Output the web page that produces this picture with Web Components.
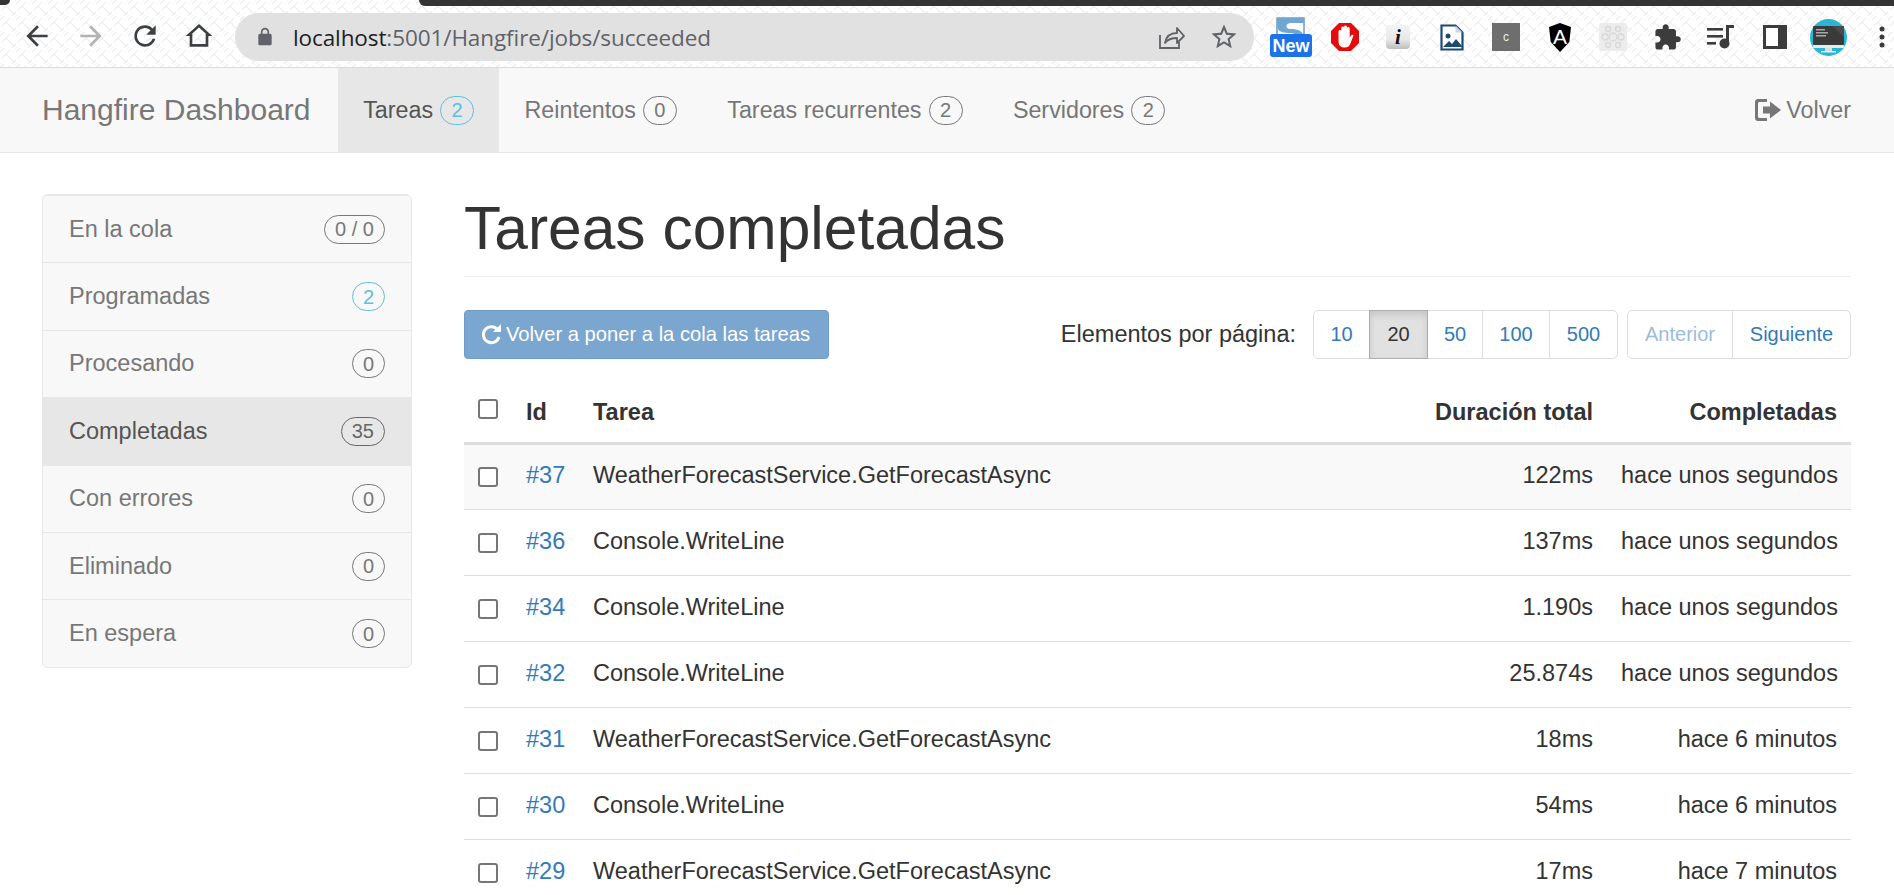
<!DOCTYPE html>
<html lang="es">
<head>
<meta charset="utf-8">
<title>Hangfire Dashboard</title>
<style>
  html, body { margin: 0; height: 895px; overflow: hidden; background: #fff; }
  body { font-family: "Liberation Sans", Arial, sans-serif; color: #333; }
</style>
</head>
<body>
<hf-chrome></hf-chrome>
<hf-navbar></hf-navbar>
<hf-layout>
  <hf-sidebar slot="side"></hf-sidebar>
  <hf-jobs-page></hf-jobs-page>
</hf-layout>

<script>
const weave = "url(\"data:image/svg+xml,%3Csvg xmlns='http://www.w3.org/2000/svg' width='16' height='16'%3E%3Cpath d='M-2 6L6-2M2 10L10 2M10 18L18 10M14 22L22 14M6 6L14 14M-2 14L2 18M14-2L18 2' stroke='%23f0f0f0' stroke-width='1.6' fill='none'/%3E%3C/svg%3E\")";

const ic = {
  back: 'M20 11H7.83l5.59-5.59L12 4l-8 8 8 8 1.41-1.41L7.83 13H20v-2z',
  fwd: 'M4 11h12.17l-5.59-5.59L12 4l8 8-8 8-1.41-1.41L16.17 13H4v-2z',
  reload: 'M17.65 6.35C16.2 4.9 14.21 4 12 4c-4.42 0-7.99 3.58-7.99 8s3.57 8 7.99 8c3.73 0 6.84-2.55 7.73-6h-2.08c-.82 2.33-3.04 4-5.65 4-3.31 0-6-2.69-6-6s2.69-6 6-6c1.66 0 3.14.69 4.22 1.78L13 11h7V4l-2.35 2.35z',
  home: 'M12 3L2 12h3v8h14v-8h3L12 3zm0 2.7l5 4.5V18H7v-7.8l5-4.5z',
  lock: 'M18 8h-1V6c0-2.76-2.24-5-5-5S7 3.24 7 6v2H6c-1.1 0-2 .9-2 2v10c0 1.1.9 2 2 2h12c1.1 0 2-.9 2-2V10c0-1.1-.9-2-2-2zM9 6c0-1.66 1.34-3 3-3s3 1.34 3 3v2H9V6z',
  star: 'M22 9.24l-7.19-.62L12 2 9.19 8.63 2 9.24l5.46 4.73L5.82 21 12 17.27 18.18 21l-1.63-7.03L22 9.24zM12 15.4l-3.76 2.27 1-4.28-3.32-2.88 4.38-.38L12 6.1l1.71 4.04 4.38.38-3.32 2.88 1 4.28L12 15.4z',
  puzzle: 'M20.5 11H19V7c0-1.1-.9-2-2-2h-4V3.5C13 2.12 11.88 1 10.5 1S8 2.12 8 3.5V5H4c-1.1 0-1.99.9-1.99 2v3.8H3.5c1.49 0 2.7 1.21 2.7 2.7s-1.21 2.7-2.7 2.7H2V20c0 1.1.9 2 2 2h3.8v-1.5c0-1.49 1.21-2.7 2.7-2.7 1.49 0 2.7 1.21 2.7 2.7V22H17c1.1 0 2-.9 2-2v-4h1.5c1.38 0 2.5-1.12 2.5-2.5S21.88 11 20.5 11z'
};
const svg24 = (d, size, fill) => `<svg width="${size}" height="${size}" viewBox="0 0 24 24"><path d="${d}" fill="${fill}"/></svg>`;

class HfChrome extends HTMLElement {
  connectedCallback() {
    this.attachShadow({ mode: 'open' });
    this.shadowRoot.innerHTML = `
      <style>
        :host { display: flex; position: relative; height: 67px; border-bottom: 1px solid #dcdcdc; background: #fff ${weave}; align-items: center; overflow: hidden; font-family: "Open Sans", sans-serif; }
        .strip { position: absolute; left: 419px; right: 0; top: 0; height: 6px; background: #333; border-bottom-left-radius: 6px; }
        .corner { position: absolute; left: 0; top: 0; width: 10px; height: 5px; background: #333; border-bottom-right-radius: 8px; }
        .nav { display: flex; margin-left: 10px; flex: none; margin-top: 5px; }
        .btn { width: 54px; height: 40px; display: flex; align-items: center; justify-content: center; flex: none; }
        .pill { flex: none; width: 1019px; height: 48px; margin-left: 9px; margin-top: 7px; border-radius: 24px; background: #e1e1e1; display: flex; align-items: center; box-sizing: border-box; padding-left: 20px; }
        .url { margin-left: 18px; font-size: 22.5px; letter-spacing: -0.1px; color: #5f6368; flex: 1; white-space: nowrap; }
        .url b { font-weight: 400; color: #202124; }
        .pill .end { width: 53px; display: flex; justify-content: center; flex: none; }
        .tools { display: flex; flex: none; margin-left: 10px; margin-top: 7px; }
        .tools span { width: 53.75px; height: 50px; flex: none; display: flex; align-items: center; justify-content: center; }
        svg { display: block; }
      </style>
      <div class="strip"></div><div class="corner"></div>
      <div class="nav">
        <div class="btn">${svg24(ic.back, 32, '#3c4043')}</div>
        <div class="btn">${svg24(ic.fwd, 32, '#b3b3b3')}</div>
        <div class="btn">${svg24(ic.reload, 32, '#3c4043')}</div>
        <div class="btn">${svg24(ic.home, 32, '#3c4043')}</div>
      </div>
      <div class="pill">
        ${svg24(ic.lock, 20, '#5f6368')}
        <div class="url"><b>localhost</b>:5001/Hangfire/jobs/succeeded</div>
        <div class="end"><svg width="30" height="30" viewBox="0 0 30 30" fill="none" stroke="#5f6368" stroke-width="1.8"><path d="M4 13v13h19v-6"/><path d="M9 21c1-6 5-10 12-10V6l7 8-7 7v-5c-5 0-9 1-12 5z" stroke-linejoin="round"/></svg></div>
        <div class="end" style="width:54px;margin-right:3px">${svg24(ic.star, 30, '#5f6368')}</div>
      </div>
      <div class="tools">
        <span><svg width="44" height="40" viewBox="0 0 44 40"><rect x="8" y="1" width="27" height="18" fill="#fff" stroke="#6b9fc9" stroke-width="1.5"/><path d="M8 1h27v5H22c-6 0-6 6-1 6 7 0 12 1 14 7H27c-1-3-4-3-7-3-9 0-12-3-12-8z" fill="#6fa6d2"/><rect x="1" y="17" width="42" height="23" rx="3" fill="#1a73e8"/><text x="22" y="35" text-anchor="middle" font-family="Liberation Sans" font-weight="700" font-size="18" fill="#fff">New</text></svg></span>
        <span><svg width="28" height="30" viewBox="0 0 28 30"><path d="M8 1h12l8 8v12l-8 8H8l-8-8V9z" fill="#e30b0b"/><path d="M7.500 15V9.500a1.400 1.400 0 0 1 2.800 0V14V6a1.400 1.400 0 0 1 2.800 0V14V5a1.400 1.400 0 0 1 2.800 0V14V6.500a1.400 1.400 0 0 1 2.800 0v9l1.500-2.200c1-1.300 2.900-.4 2 1L19 22.500c-1 2-2.500 3-5 3-4 0-6.500-2-6.500-6z" fill="#fff"/></svg></span>
        <span><svg width="24" height="24" viewBox="0 0 24 24"><defs><linearGradient id="g" x1="0" y1="0" x2="0" y2="1"><stop offset="0" stop-color="#f4f4f4"/><stop offset=".6" stop-color="#e8e8e8"/><stop offset="1" stop-color="#bdbdbd"/></linearGradient></defs><rect width="24" height="24" rx="4" fill="url(#g)"/><text x="12" y="19" text-anchor="middle" font-family="Liberation Serif" font-style="italic" font-weight="700" font-size="21" fill="#111">i</text></svg></span>
        <span><svg width="24" height="27" viewBox="0 0 24 27"><path d="M1.500 1.500h14l7 7v17h-21z" fill="#fff" stroke="#1d4a73" stroke-width="2.200"/><path d="M15.500 1.500v7h7z" fill="#cfd8e0"/><circle cx="8" cy="12" r="2.500" fill="#1d4a73"/><path d="M3 23l6-6 3 3 4-5 6 7v1H3z" fill="#1d4a73"/></svg></span>
        <span><svg width="28" height="28" viewBox="0 0 28 28"><rect width="28" height="28" fill="#6e6e6e"/><text x="14" y="18" text-anchor="middle" font-family="Liberation Sans" font-size="12" fill="#eee">c</text></svg></span>
        <span><svg width="24" height="29" viewBox="0 0 24 29"><path d="M12 0l11 4-1.700 15L12 29 2.700 19 1 4z" fill="#000"/><text x="12" y="21" text-anchor="middle" font-family="Liberation Sans" font-size="21" fill="#fff">A</text></svg></span>
        <span><svg width="28" height="28" viewBox="0 0 28 28" fill="none" stroke="#d8d8d8" stroke-width="1.300"><rect width="28" height="28" rx="2" fill="#ececec" stroke="none"/><circle cx="14" cy="14" r="4"/><circle cx="6" cy="14" r="3"/><circle cx="22" cy="14" r="3"/><circle cx="9" cy="6" r="2.500"/><circle cx="19" cy="6" r="2.500"/><circle cx="9" cy="22" r="2.500"/><circle cx="19" cy="22" r="2.500"/></svg></span>
        <span>${svg24(ic.puzzle, 29, '#3c3c3c')}</span>
        <span><svg width="28" height="24" viewBox="0 0 28 24" fill="#3c3c3c"><rect x="0" y="3" width="16" height="2.600"/><rect x="0" y="10" width="16" height="2.600"/><rect x="0" y="17" width="9" height="2.600"/><rect x="19" y="0" width="3" height="18"/><rect x="19" y="0" width="8" height="3"/><circle cx="17.500" cy="18.500" r="5"/></svg></span>
        <span><svg width="24" height="24" viewBox="0 0 24 24"><rect width="24" height="24" fill="#3c3c3c"/><rect x="3" y="3" width="12" height="18" fill="#fff"/></svg></span>
        <span><svg width="37" height="37" viewBox="0 0 37 37"><circle cx="18.500" cy="18.500" r="18.500" fill="#29b6d6"/><rect x="3" y="7" width="31" height="19" rx="1" fill="#3a3a3a"/><path d="M22 7h12v11z" fill="#4a4a4a"/><rect x="6" y="10" width="9" height="1.500" fill="#aaa"/><rect x="6" y="13" width="12" height="1.500" fill="#aaa"/><rect x="6" y="16" width="10" height="1.500" fill="#aaa"/><rect x="3" y="26" width="31" height="3" fill="#e8e8e8"/><rect x="15" y="29" width="7" height="3" fill="#ddd"/><rect x="11" y="32" width="15" height="1.500" fill="#eee"/></svg></span>
        <span><svg width="6" height="22" viewBox="0 0 6 22" fill="#3c3c3c"><circle cx="3" cy="3" r="2.500"/><circle cx="3" cy="11" r="2.500"/><circle cx="3" cy="19" r="2.500"/></svg></span>
      </div>`;
  }
}

// pill counter used in navbar and sidebar
class HfBadge extends HTMLElement {
  connectedCallback() {
    this.attachShadow({ mode: 'open' });
    this.shadowRoot.innerHTML = `
      <style>
        :host { display: inline-flex; align-items: center; justify-content: center; box-sizing: border-box; height: 29px; min-width: var(--badge-min, 33px); padding: 0 10px; border: 1px solid currentColor; border-radius: 15px; font-size: 20px; line-height: 1; color: #777; white-space: nowrap; }
        :host([kind=info]) { color: #5bc0de; }
        :host([kind=dark]) { color: #666; }
      </style><slot></slot>`;
  }
}

class HfNavLink extends HTMLElement {
  connectedCallback() {
    const active = this.hasAttribute('active');
    this.attachShadow({ mode: 'open' });
    this.shadowRoot.innerHTML = `
      <style>
        :host { display: flex; align-items: center; height: 84px; padding: 0 25.2px; gap: 7px; font-size: 23.3px; color: #777; flex: none; --badge-min: 34px; }
        :host([active]) { background: #e7e7e7; color: #555; }
      </style>
      <slot></slot><hf-badge kind="${active ? 'info' : ''}">${this.getAttribute('count')}</hf-badge>`;
  }
}

class HfNavbar extends HTMLElement {
  connectedCallback() {
    this.attachShadow({ mode: 'open' });
    this.shadowRoot.innerHTML = `
      <style>
        :host { display: flex; height: 84px; background: #f8f8f8; border-bottom: 1px solid #e7e7e7; padding: 0 43px 0 42px; align-items: center; }
        .brand { font-size: 30px; color: #777; width: 296px; flex: none; white-space: nowrap; }
        .links { display: flex; flex: 1; }
        .back { display: flex; align-items: center; gap: 5px; font-size: 23.3px; color: #777; }
        svg { display: block; }
      </style>
      <div class="brand">Hangfire Dashboard</div>
      <div class="links">
        <hf-nav-link active count="2">Tareas</hf-nav-link>
        <hf-nav-link count="0">Reintentos</hf-nav-link>
        <hf-nav-link count="2">Tareas recurrentes</hf-nav-link>
        <hf-nav-link count="2">Servidores</hf-nav-link>
      </div>
      <div class="back">
        <svg width="26" height="22" viewBox="0 0 26 22" fill="#777"><path d="M3 0h9v3H4.500C3.700 3 3 3.700 3 4.500v13c0 .8.700 1.500 1.500 1.500H12v3H3c-1.700 0-3-1.300-3-3V3c0-1.700 1.300-3 3-3z"/><path d="M8 7.500h7V2.500L26 11 15 19.500v-5H8z" /></svg>
        <span>Volver</span>
      </div>`;
  }
}

class HfLayout extends HTMLElement {
  connectedCallback() {
    this.attachShadow({ mode: 'open' });
    this.shadowRoot.innerHTML = `
      <style>
        :host { display: flex; padding: 0 43px 0 42px; gap: 52px; align-items: flex-start; }
        .side { flex: 0 0 370px; margin-top: 41px; }
        .main { flex: 1; min-width: 0; }
      </style>
      <div class="side"><slot name="side"></slot></div>
      <div class="main"><slot></slot></div>`;
  }
}

class HfSidebar extends HTMLElement {
  connectedCallback() {
    const items = [['En la cola', '0 / 0'], ['Programadas', '2', 'info'], ['Procesando', '0'], ['Completadas', '35', 'dark', 1], ['Con errores', '0'], ['Eliminado', '0'], ['En espera', '0']];
    this.attachShadow({ mode: 'open' });
    this.shadowRoot.innerHTML = `
      <style>
        :host { display: block; background: #f8f8f8; border: 1px solid #e7e7e7; border-radius: 6px; overflow: hidden; }
        .item { display: flex; align-items: center; justify-content: space-between; box-sizing: border-box; height: 67.4px; padding: 0 26px 0 26px; font-size: 23.5px; color: #777; border-top: 1px solid #e7e7e7; }
        .item:first-child { border-top: 0; height: 66.4px; }
        .item.on { background: #e7e7e7; color: #555; }
      </style>
      ${items.map(i => `<div class="item ${i[3] ? 'on' : ''}"><span>${i[0]}</span><hf-badge kind="${i[2] || ''}">${i[1]}</hf-badge></div>`).join('')}`;
  }
}

class HfPager extends HTMLElement {
  connectedCallback() {
    this.attachShadow({ mode: 'open' });
    this.shadowRoot.innerHTML = `
      <style>
        :host { display: flex; align-items: center; margin-left: auto; font-size: 23.5px; color: #333; }
        .label { margin-right: 17px; }
        .group { display: flex; height: 49px; }
        .group + .group { margin-left: 9px; }
        a { display: flex; align-items: center; justify-content: center; box-sizing: border-box; border: 1px solid #ddd; margin-left: -1px; color: #337ab7; font-size: 20px; background: #fff; }
        a:first-child { margin-left: 0; border-radius: 5px 0 0 5px; }
        a:last-child { border-radius: 0 5px 5px 0; }
        a.on { background: #e1e1e1; color: #333; border-color: #adadad; box-shadow: inset 0 4px 7px rgba(0,0,0,.12); position: relative; }
        a.off { color: #9bbddb; }
      </style>
      <span class="label">Elementos por página:</span>
      <div class="group">
        <a style="width:57px">10</a><a class="on" style="width:59px">20</a><a style="width:56px">50</a><a style="width:68px">100</a><a style="width:69px">500</a>
      </div>
      <div class="group">
        <a class="off" style="width:106px">Anterior</a><a style="width:119px">Siguiente</a>
      </div>`;
  }
}

class HfJobsTable extends HTMLElement {
  connectedCallback() {
    const w = 'WeatherForecastService.GetForecastAsync', c = 'Console.WriteLine';
    const rows = [['37', w, '122ms', 'hace unos segundos'], ['36', c, '137ms', 'hace unos segundos'], ['34', c, '1.190s', 'hace unos segundos'], ['32', c, '25.874s', 'hace unos segundos'], ['31', w, '18ms', 'hace 6 minutos'], ['30', c, '54ms', 'hace 6 minutos'], ['29', w, '17ms', 'hace 7 minutos']];
    this.attachShadow({ mode: 'open' });
    this.shadowRoot.innerHTML = `
      <style>
        :host { display: block; font-size: 23.5px; color: #333; }
        table { width: 100%; border-collapse: collapse; table-layout: fixed; }
        th { font-weight: 700; height: 61.5px; padding: 0 14px; text-align: left; border-bottom: 3px solid #ddd; box-sizing: border-box; }
        td { height: 66px; padding: 0 14px 3px; border-bottom: 1px solid #ddd; box-sizing: border-box; white-space: nowrap; }
        tbody tr:first-child { background: #f9f9f9; }
        .r { text-align: right; }
        .cb { width: 20px; height: 20px; border: 2px solid #767676; border-radius: 3px; box-sizing: border-box; background: #fff; display: block; }
        th .cb { margin-top: -6px; }
        td:first-child { padding: 0 0 0 14px; }
        th:first-child { padding: 0 0 0 14px; }
        a { color: #337ab7; }
      </style>
      <table>
        <colgroup><col style="width:48px"><col style="width:67px"><col><col style="width:200px"><col style="width:244px"></colgroup>
        <thead><tr><th><span class="cb"></span></th><th>Id</th><th>Tarea</th><th class="r">Duración total</th><th class="r">Completadas</th></tr></thead>
        <tbody>${rows.map(r => `<tr><td><span class="cb"></span></td><td><a>#${r[0]}</a></td><td>${r[1]}</td><td class="r">${r[2]}</td><td class="r">${r[3]}</td></tr>`).join('')}</tbody>
      </table>`;
  }
}

class HfJobsPage extends HTMLElement {
  connectedCallback() {
    this.attachShadow({ mode: 'open' });
    this.shadowRoot.innerHTML = `
      <style>
        :host { display: block; }
        h1 { margin: 0; height: 124px; box-sizing: border-box; padding-top: 40px; line-height: 70px; font-size: 60.5px; font-weight: 400; color: #333; border-bottom: 1px solid #eee; }
        .bar { display: flex; align-items: center; margin-top: 33px; margin-bottom: 23px; }
        .requeue { display: flex; align-items: center; gap: 5px; height: 49px; width: 365px; box-sizing: border-box; padding-left: 16px; background: #7aa6cf; border: 1px solid #6f9cc6; border-radius: 4px; color: #fff; font-size: 20.2px; }
        svg { display: block; }
      </style>
      <h1>Tareas completadas</h1>
      <div class="bar">
        <div class="requeue">
          <svg width="20" height="22" viewBox="0 0 20 22" fill="none"><path d="M16.500 5.500A8 8 0 1 0 18 13" stroke="#fff" stroke-width="3"/><path d="M12 8h8V0z" fill="#fff"/></svg>
          <span>Volver a poner a la cola las tareas</span>
        </div>
        <hf-pager></hf-pager>
      </div>
      <hf-jobs-table></hf-jobs-table>`;
  }
}

customElements.define('hf-chrome', HfChrome);
customElements.define('hf-badge', HfBadge);
customElements.define('hf-nav-link', HfNavLink);
customElements.define('hf-navbar', HfNavbar);
customElements.define('hf-layout', HfLayout);
customElements.define('hf-sidebar', HfSidebar);
customElements.define('hf-pager', HfPager);
customElements.define('hf-jobs-table', HfJobsTable);
customElements.define('hf-jobs-page', HfJobsPage);
</script>
</body>
</html>
